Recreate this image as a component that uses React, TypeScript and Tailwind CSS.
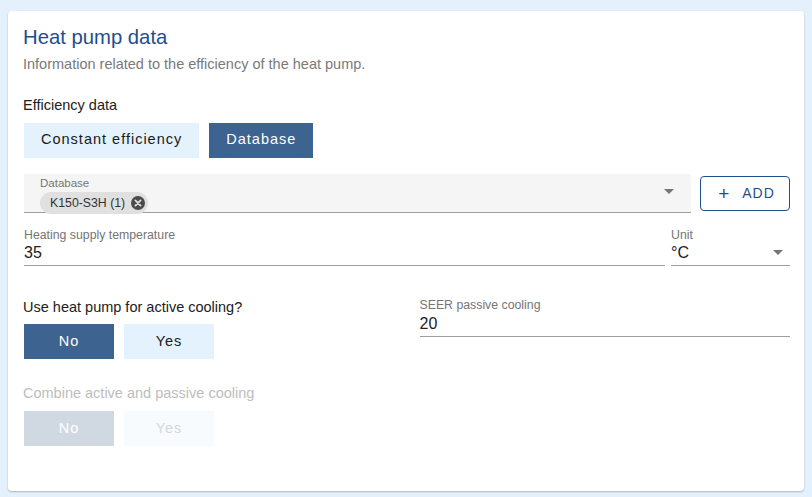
import React from 'react';

const FONT = { fontFamily: '"Liberation Sans", Arial, sans-serif' };

function Caret() {
  return (
    <svg width="10" height="5" viewBox="0 0 10 5" className="shrink-0">
      <path d="M0 0 L10 0 L5 5 Z" fill="#757575" />
    </svg>
  );
}

function Toggle({ options, value, disabled }: { options: string[]; value: string; disabled?: boolean }) {
  return (
    <div className="flex gap-[10px]">
      {options.map((o) => {
        const active = o === value;
        let cls = '';
        if (disabled) cls = active ? 'bg-[#d0d8e2] text-white' : 'bg-[#f7fbfe] text-[#d6d6d6]';
        else cls = active ? 'bg-[#3d6390] text-white' : 'bg-[#e3f2fd] text-[#1a1a1a]';
        return (
          <button
            key={o}
            className={`h-[35px] min-w-[90px] px-[17px] text-[14.5px] tracking-[1px] ${cls}`}
          >
            {o}
          </button>
        );
      })}
    </div>
  );
}

function Field({ label, value, caret }: { label: string; value: string; caret?: boolean }) {
  return (
    <div className="border-b border-[#9e9e9e]">
      <div className="text-[12.3px] leading-[15px] text-[#757575]">{label}</div>
      <div className="flex items-center justify-between h-[22px] pb-[2px]">
        <span className="text-[16px] text-[#212121]">{value}</span>
        {caret && <span className="mr-[7px]"><Caret /></span>}
      </div>
    </div>
  );
}

export default function App() {
  return (
    <div className="min-h-[497px] bg-[#e4f1fc] pt-[11px] px-[8px] pb-[6px]" style={FONT}>
      <div className="bg-white rounded-[4px] shadow-[0_1px_2px_rgba(0,0,0,0.25)] h-[480px] pl-[15px] pr-[14px] pt-[14px]">
        <h1 className="text-[20.3px] leading-[24px] text-[#1f4e8c]">Heat pump data</h1>
        <p className="mt-[5px] text-[14.5px] text-[#7a7a7a]">Information related to the efficiency of the heat pump.</p>

        <div className="mt-[19px] text-[14.5px] text-[#212121]">Efficiency data</div>
        <div className="mt-[6px] pl-px">
          <Toggle options={['Constant efficiency', 'Database']} value="Database" />
        </div>

        {/* Database select + add */}
        <div className="mt-[16px] flex items-center gap-[9px] pl-px">
          <div className="flex-1 h-[39px] bg-[#f5f5f5] border-b border-[#9e9e9e] pl-[16px] pr-[17px] flex justify-between">
            <div className="pt-[3px]">
              <div className="text-[11.5px] leading-[13px] text-[#757575]">Database</div>
              <div className="inline-flex items-center h-[22px] rounded-full bg-[#e0e0e0] pl-[10px] pr-[3px] gap-[6px]">
                <span className="text-[12.3px] text-[#333]">K150-S3H (1)</span>
                <svg width="14" height="14" viewBox="0 0 14 14">
                  <circle cx="7" cy="7" r="7" fill="#4a4a4a" />
                  <path d="M4.4 4.4 L9.6 9.6 M9.6 4.4 L4.4 9.6" stroke="#e0e0e0" strokeWidth="1.8" strokeLinecap="round" />
                </svg>
              </div>
            </div>
            <div className="self-center mt-[-2px]"><Caret /></div>
          </div>
          <button className="w-[90px] h-[35px] rounded-[4px] border border-[#1f4e8c] text-[#1f4e8c] text-[14px] tracking-[1px] flex items-center justify-center gap-[12px] pl-[3px]">
            <span className="text-[19px] leading-none font-light">+</span>
            <span>ADD</span>
          </button>
        </div>

        {/* Heating supply temperature + unit */}
        <div className="mt-[15px] flex gap-[6px] pl-px">
          <div className="flex-1"><Field label="Heating supply temperature" value="35" /></div>
          <div className="w-[119px]"><Field label="Unit" value="°C" caret /></div>
        </div>

        <div className="mt-[31px] grid grid-cols-2 gap-x-6">
          <div>
            <div className="text-[14.5px] text-[#212121]">Use heat pump for active cooling?</div>
            <div className="mt-[6px] pl-px">
              <Toggle options={['No', 'Yes']} value="No" />
            </div>
            <div className="mt-[24px] text-[14.5px] text-[#bdbdbd]">Combine active and passive cooling</div>
            <div className="mt-[6px] pl-px">
              <Toggle options={['No', 'Yes']} value="No" disabled />
            </div>
          </div>
          <div className="pl-px pt-[1px]">
            <div className="border-b border-[#9e9e9e]">
              <div className="text-[12.3px] leading-[15px] text-[#757575]">SEER passive cooling</div>
              <div className="flex items-center h-[23px] pt-[1px] pb-[2px]">
                <span className="text-[16px] text-[#212121]">20</span>
              </div>
            </div>
          </div>
        </div>
      </div>
    </div>
  );
}
